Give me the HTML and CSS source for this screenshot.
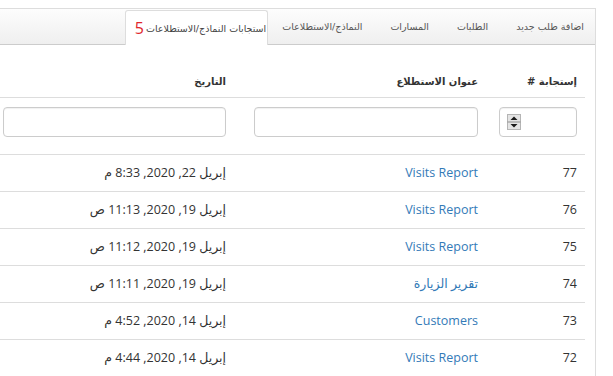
FILE: index.html
```html
<!DOCTYPE html>
<html lang="ar" dir="rtl">
<head>
<meta charset="utf-8">
<title>استجابات النماذج</title>
<link rel="stylesheet" href="styles.css">
</head>
<body>
<div class="page">
  <div class="panel">
    <ul class="tabs">
      <li class="tab tab-first">اضافة طلب جديد</li>
      <li class="tab">الطلبات</li>
      <li class="tab">المسارات</li>
      <li class="tab">النماذج/الاستطلاعات</li>
      <li class="tab active">استجابات النماذج/الاستطلاعات<span class="badge">5</span></li>
    </ul>
    <div class="content">
      <table class="grid">
        <colgroup>
          <col class="c-num">
          <col class="c-title">
          <col class="c-date">
        </colgroup>
        <thead>
          <tr class="head-row">
            <th>إستجابة #</th>
            <th>عنوان الاستطلاع</th>
            <th>التاريخ</th>
          </tr>
          <tr class="filter-row">
            <td>
              <div class="numbox">
                <input class="numbox-input" type="text" aria-label="رقم">
                <svg class="spinner" width="14" height="16" viewBox="0 0 14 16">
                  <rect x="0.5" y="0.5" width="13" height="15" fill="#e4e4e4" stroke="#b5b5b5"/>
                  <line x1="0.5" y1="8" x2="13.5" y2="8" stroke="#8f8f8f"/>
                  <path d="M3.5 6 L7 2.5 L10.5 6Z" fill="#1a1a1a"/>
                  <path d="M3.5 10 L7 13.5 L10.5 10Z" fill="#1a1a1a"/>
                </svg>
              </div>
            </td>
            <td><input class="field field-title" type="text" aria-label="عنوان"></td>
            <td><input class="field field-date" type="text" aria-label="تاريخ"></td>
          </tr>
        </thead>
        <tbody>
          <tr><td>77</td><td><a class="link" href="#">Visits Report</a></td><td>إبريل 22, 2020, 8:33 م</td></tr>
          <tr><td>76</td><td><a class="link" href="#">Visits Report</a></td><td>إبريل 19, 2020, 11:13 ص</td></tr>
          <tr><td>75</td><td><a class="link" href="#">Visits Report</a></td><td>إبريل 19, 2020, 11:12 ص</td></tr>
          <tr><td>74</td><td><a class="link" href="#">تقرير الزيارة</a></td><td>إبريل 19, 2020, 11:11 ص</td></tr>
          <tr><td>73</td><td><a class="link" href="#">Customers</a></td><td>إبريل 14, 2020, 4:52 م</td></tr>
          <tr><td>72</td><td><a class="link" href="#">Visits Report</a></td><td>إبريل 14, 2020, 4:44 م</td></tr>
        </tbody>
      </table>
    </div>
  </div>
</div>
</body>
</html>
```

FILE: styles.css
```css
html, body {
  margin: 0;
  padding: 0;
  background: #fff;
  overflow: hidden;
}

body {
  font-family: "Open Sans", "DejaVu Sans", sans-serif;
  font-size: 12px;
  color: #333;
}

.page {
  direction: rtl;
  padding: 8px 17px 0 0;
}

.panel {
  border-right: 1px solid #ddd;
  height: 380px;
}

.tabs {
  display: flex;
  list-style: none;
  margin: 0;
  padding: 0;
  height: 35px;
  border-top: 1px solid #ddd;
  border-bottom: 1px solid #ccc;
  background: linear-gradient(#fdfdfd, #efefef);
}

.tab {
  display: flex;
  align-items: center;
  padding: 0 14px;
  font-family: "DejaVu Sans", sans-serif;
  font-size: 9.5px;
  color: #555;
  white-space: nowrap;
}

.tab-first {
  padding-right: 11px;
}

.tab.active {
  margin-top: 1px;
  margin-bottom: -1px;
  padding: 0 1px 0 9px;
  background: #fff;
  border: 1px solid #ddd;
  border-bottom: none;
  border-radius: 3px 3px 0 0;
  color: #444;
}

.badge {
  font-family: "Open Sans", sans-serif;
  font-size: 16px;
  color: #e0262b;
  margin-right: 2px;
  line-height: 1;
}

.content {
  padding: 18px 10px 0 0;
}

.grid {
  width: 640px;
  border-collapse: collapse;
}

.c-num { width: 99px; }
.c-title { width: 252px; }

.grid th {
  text-align: right;
  font-family: "DejaVu Sans", sans-serif;
  font-weight: bold;
  font-size: 10px;
  line-height: 18px;
  padding: 10px 8px 6px;
  border-bottom: 1px solid #ddd;
  color: #333;
}

.filter-row td {
  padding: 9px 8px 17px;
  border-bottom: 1px solid #ddd;
}

.field {
  display: block;
  box-sizing: border-box;
  height: 30px;
  border: 1px solid #ccc;
  border-radius: 4px;
  box-shadow: inset 0 1px 1px rgba(0, 0, 0, 0.06);
  background: #fff;
  margin: 0;
}

.field-title { width: 224px; }
.field-date { width: 223px; }

.numbox {
  display: flex;
  align-items: center;
  box-sizing: border-box;
  width: 78px;
  height: 30px;
  padding: 0 2px 1px 7px;
  border: 1px solid #ccc;
  border-radius: 4px;
  box-shadow: inset 0 1px 1px rgba(0, 0, 0, 0.06);
  background: #fff;
}

.numbox-input {
  flex: 1;
  width: 0;
  border: none;
  outline: none;
  background: transparent;
  padding: 0;
}

.spinner {
  display: block;
}

.grid tbody td {
  padding: 9px 8px;
  font-size: 12.5px;
  line-height: 18px;
  text-align: right;
  border-bottom: 1px solid #ddd;
  white-space: nowrap;
}

.link {
  color: #337ab7;
  text-decoration: none;
}
```
